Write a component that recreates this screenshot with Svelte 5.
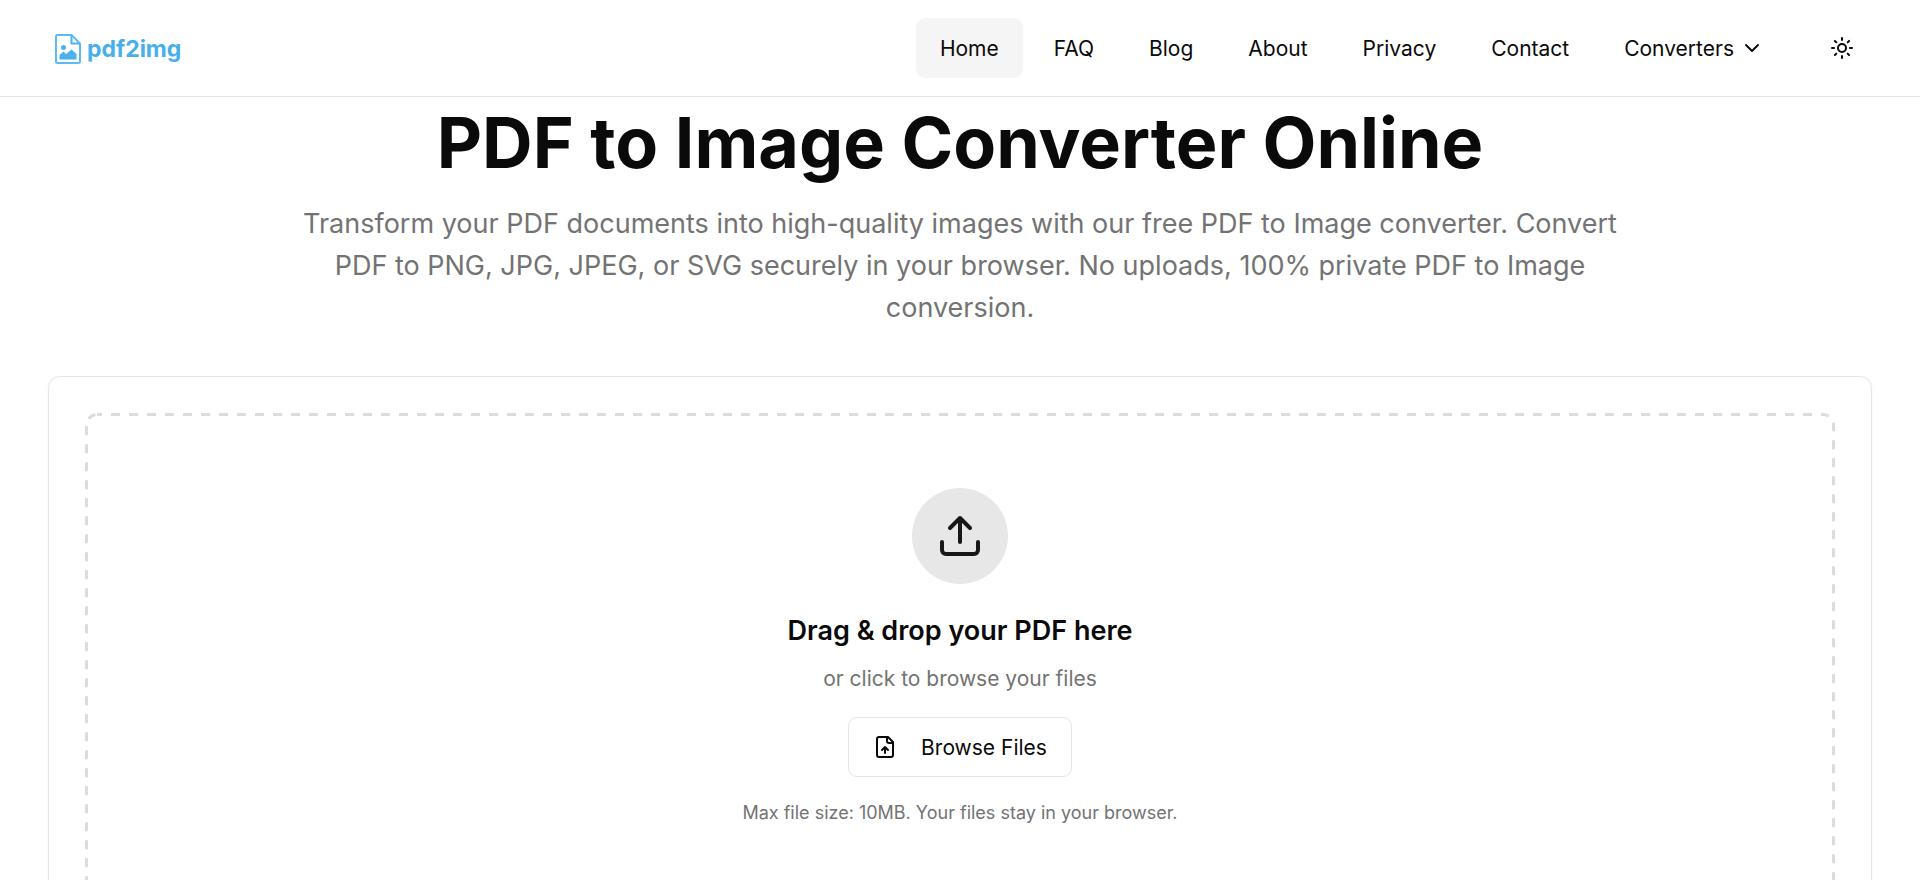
<script lang="ts">
  const links = [
    { label: 'Home', href: '/' },
    { label: 'FAQ', href: '/faq' },
    { label: 'Blog', href: '/blog' },
    { label: 'About', href: '/about' },
    { label: 'Privacy', href: '/privacy' },
    { label: 'Contact', href: '/contact' },
  ];

  let current = '/';
  let fileInput: HTMLInputElement;

  function browse() {
    fileInput.click();
  }
</script>

<header class="header">
  <a class="logo" href="/">
    <svg class="logo-mark" viewBox="0 0 26 30" fill="none" aria-hidden="true">
      <path d="M2.5 1H16.5L25 9.5V27.5A1.5 1.5 0 0 1 23.5 29H2.5A1.5 1.5 0 0 1 1 27.5V2.5A1.5 1.5 0 0 1 2.5 1Z" stroke="#5bbcf5" stroke-width="2" stroke-linejoin="round" />
      <path d="M16.5 1V9.5H25" stroke="#4cb4ef" stroke-width="2" stroke-linejoin="round" />
      <circle cx="8.5" cy="13.5" r="2.5" fill="#4cb0ea" />
      <path d="M4.5 25.5V21L8.5 17.5L11 20L16.5 15.5L21.5 20V25.5Z" fill="#4cb0ea" />
    </svg>
    <span class="logo-text">pdf2img</span>
  </a>

  <nav class="nav">
    {#each links as link}
      <a class="nav-item" class:active={link.href === current} href={link.href}>
        <span class="label">{link.label}</span>
      </a>
    {/each}
    <button class="nav-item" type="button" aria-haspopup="true">
      <span class="label">Converters</span>
      <svg class="icon" viewBox="0 0 24 24" aria-hidden="true"><path d="m6 9 6 6 6-6" /></svg>
    </button>
    <button class="theme" type="button" aria-label="Toggle theme">
      <svg class="icon" viewBox="0 0 24 24" aria-hidden="true">
        <circle cx="12" cy="12" r="4" />
        <path d="M12 2v2M12 20v2M4.93 4.93l1.41 1.41M17.66 17.66l1.41 1.41M2 12h2M20 12h2M6.34 17.66l-1.41 1.41M19.07 4.93l-1.41 1.41" />
      </svg>
    </button>
  </nav>
</header>

<main class="main">
  <h1>PDF to Image Converter Online</h1>
  <p class="lead">
    Transform your PDF documents into high-quality images with our free PDF to Image converter.
    Convert PDF to PNG, JPG, JPEG, or SVG securely in your browser. No uploads, 100% private PDF
    to Image conversion.
  </p>

  <section class="card">
    <div class="dropzone">
      <svg class="outline" aria-hidden="true"><rect rx="12" /></svg>
      <div class="badge">
        <svg class="icon large" viewBox="0 0 24 24" aria-hidden="true">
          <path d="M21 15v4a2 2 0 0 1-2 2H5a2 2 0 0 1-2-2v-4" />
          <path d="m17 8-5-5-5 5M12 3v12" />
        </svg>
      </div>
      <h2>Drag &amp; drop your PDF here</h2>
      <p class="hint">or click to browse your files</p>
      <input bind:this={fileInput} type="file" accept="application/pdf" aria-label="PDF file" hidden />
      <button class="browse" type="button" on:click={browse}>
        <svg class="icon" viewBox="0 0 24 24" aria-hidden="true">
          <path d="M15 2H6a2 2 0 0 0-2 2v16a2 2 0 0 0 2 2h12a2 2 0 0 0 2-2V7Z" />
          <path d="M14 2v4a2 2 0 0 0 2 2h4M12 12v6M15 15l-3-3-3 3" />
        </svg>
        <span class="label">Browse Files</span>
      </button>
      <p class="limit">Max file size: 10MB. Your files stay in your browser.</p>
    </div>
  </section>
</main>

<style>
  :global(body) {
    background: #fff;
    color: #0a0a0a;
    font-family: Inter, sans-serif;
  }
  h1,
  h2,
  p {
    margin: 0;
  }
  button {
    border: 0;
    background: none;
    color: inherit;
    font: inherit;
    cursor: pointer;
  }
  .header {
    display: flex;
    align-items: center;
    justify-content: space-between;
    height: 96px;
    padding: 0 48px;
    border-bottom: 1px solid #e5e5e5;
  }
  .logo {
    display: flex;
    align-items: center;
    gap: 6px;
    padding: 2px 0 0 7px;
    color: #48aeec;
    text-decoration: none;
  }
  .logo-mark {
    width: 26px;
    height: 30px;
  }
  .logo-text {
    font-size: 23px;
    font-weight: 700;
    line-height: 30px;
  }
  .nav {
    display: flex;
    align-items: center;
    gap: 7px;
  }
  .nav-item {
    display: flex;
    align-items: center;
    gap: 6px;
    box-sizing: border-box;
    height: 60px;
    padding: 0 24px;
    border-radius: 9px;
    color: #0a0a0a;
    font-size: 21px;
    line-height: 30px;
    text-decoration: none;
  }
  .nav-item.active {
    background: #f5f5f5;
  }
  .label {
    padding-top: 2px;
  }
  .icon {
    width: 24px;
    height: 24px;
    fill: none;
    stroke: currentColor;
    stroke-width: 2;
    stroke-linecap: round;
    stroke-linejoin: round;
  }
  .icon.large {
    width: 48px;
    height: 48px;
  }
  .theme {
    display: flex;
    align-items: center;
    justify-content: center;
    width: 60px;
    height: 60px;
    margin-left: 17px;
    padding: 0;
  }
  .main {
    padding: 10px 48px 48px;
    text-align: center;
  }
  h1 {
    font-size: 70px;
    font-weight: 700;
    line-height: 72px;
  }
  .lead {
    max-width: 1344px;
    margin: 24px auto 47px;
    color: #737373;
    font-size: 27px;
    line-height: 42px;
  }
  .card {
    padding: 36px;
    border: 1px solid #e5e5e5;
    border-radius: 12px;
    box-shadow: 0 1px 3px rgba(0, 0, 0, 0.05);
  }
  .dropzone {
    position: relative;
    display: flex;
    flex-direction: column;
    align-items: center;
    padding: 75px;
  }
  /* dashed frame over the whole drop zone; the outer half of the stroke is clipped */
  .outline {
    position: absolute;
    inset: 0;
    width: 100%;
    height: 100%;
    border-radius: 12px;
    overflow: hidden;
    pointer-events: none;
  }
  .outline rect {
    width: 100%;
    height: 100%;
    fill: none;
    stroke: #dcdcdc;
    stroke-width: 6px;
    stroke-dasharray: 9;
    stroke-dashoffset: 4;
  }
  .badge {
    display: flex;
    align-items: center;
    justify-content: center;
    width: 96px;
    height: 96px;
    margin-bottom: 26px;
    border-radius: 50%;
    background: #e7e7e7;
    color: #171717;
  }
  h2 {
    font-size: 27px;
    font-weight: 600;
    line-height: 42px;
  }
  .hint {
    margin: 12px 0 23px;
    color: #737373;
    font-size: 21px;
    line-height: 30px;
  }
  .browse {
    display: flex;
    align-items: center;
    gap: 24px;
    height: 60px;
    padding: 0 24px;
    border: 1px solid #e5e5e5;
    border-radius: 9px;
    font-size: 21px;
    line-height: 30px;
  }
  .limit {
    margin-top: 24px;
    color: #737373;
    font-size: 18px;
    line-height: 24px;
  }
</style>
